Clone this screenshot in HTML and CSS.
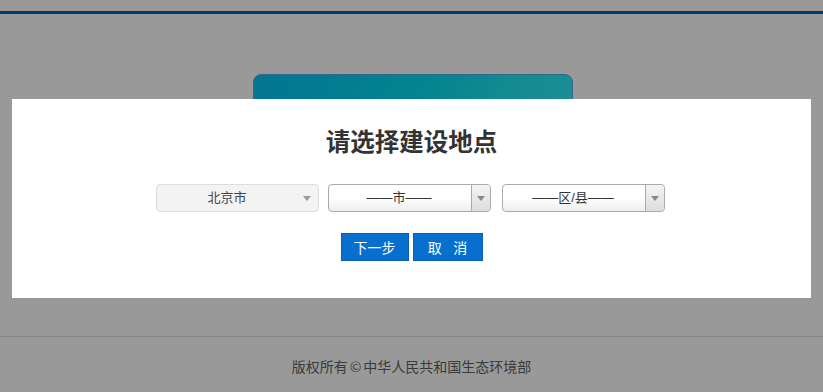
FILE: index.html
```html
<!DOCTYPE html>
<html lang="zh">
<head>
    <meta charset="UTF-8">
    <title>请选择建设地点</title>
    <link rel="stylesheet" href="styles.css">
</head>
<body>
    <div class="top-line"></div>
    <div class="main">
        <div class="banner"></div>
    </div>
    <div class="footer">版权所有<span class="copy">©</span>中华人民共和国生态环境部</div>

    <div class="modal">
        <h2>请选择建设地点</h2>
        <div class="selects">
            <div class="sel sel-disabled"><span>北京市</span><i class="arrow"></i></div>
            <div class="sel"><span>——市——</span><b class="btn-arrow"><i class="arrow"></i></b></div>
            <div class="sel"><span>——区/县——</span><b class="btn-arrow"><i class="arrow"></i></b></div>
        </div>
        <div class="buttons">
            <button class="btn">下一步</button>
            <button class="btn btn-cancel">取 &nbsp; 消</button>
        </div>
    </div>
</body>
</html>
```

FILE: styles.css
```css
body { margin: 0; background: #999; font-family: "Liberation Sans", "Noto Sans CJK SC", sans-serif; height: 392px; overflow: hidden; }
.top-line { margin-top: 11px; height: 3px; background: #003a6b; }
.main { height: 322px; display: flex; justify-content: center; }
.banner { margin-top: 60px; margin-left: 2px; width: 318px; height: 60px; border: 1px solid #2f6a8e; border-radius: 8px 8px 0 0; background: linear-gradient(120deg, #027592 0%, #03848f 50%, #138b91 75%, #1e8f95 100%); }
.footer { border-top: 1px solid #878787; height: 55px; line-height: 58px; text-align: center; color: #3a3a3a; font-size: 14px; font-family: "Noto Sans CJK SC", sans-serif; }
.footer .copy { margin: 0 2px; }

.modal { position: absolute; left: 12px; top: 99px; width: 799px; height: 199px; background: #fff; text-align: center; }
.modal h2 { margin: 27px 0 0; height: 33px; line-height: 33px; font-size: 24.5px; font-weight: bold; color: #333; }
.selects { display: flex; justify-content: center; margin-top: 25px; margin-left: -3px; }
.sel { position: relative; box-sizing: border-box; width: 163px; height: 28px; margin-right: 9px; border: 1px solid #aaa; border-radius: 4px; background: linear-gradient(#fff 50%, #eee); font-size: 13px; line-height: 26px; color: #333; }
.sel:last-child { margin-right: 0; }
.sel span { display: block; padding-right: 20px; }
.sel + .sel + .sel { margin-left: 2px; }
.sel-disabled { width: 163px; border-color: #ddd; background: #f3f3f3; color: #444; }
.sel-disabled span { padding-right: 20px; }
.btn-arrow { position: absolute; right: 0; top: 0; width: 18px; height: 26px; border-left: 1px solid #aaa; border-radius: 0 4px 4px 0; background: linear-gradient(#f4f4f4, #ddd); }
.arrow { position: absolute; top: 11px; width: 0; height: 0; border-left: 4px solid transparent; border-right: 4px solid transparent; border-top: 5px solid #888; }
.btn-arrow .arrow { left: 5px; }
.sel-disabled .arrow { right: 7px; border-top-color: #999; }
.buttons { display: flex; justify-content: center; gap: 4px; margin-top: 21px; margin-left: 0; }
.btn { width: 68px; height: 28px; padding: 0; border: 1px solid #0a5fb0; background: #0770cf; color: #fff; font-size: 14px; font-family: "Liberation Sans", "Noto Sans CJK SC", sans-serif; cursor: pointer; }
.btn-cancel { width: 70px; }
```
